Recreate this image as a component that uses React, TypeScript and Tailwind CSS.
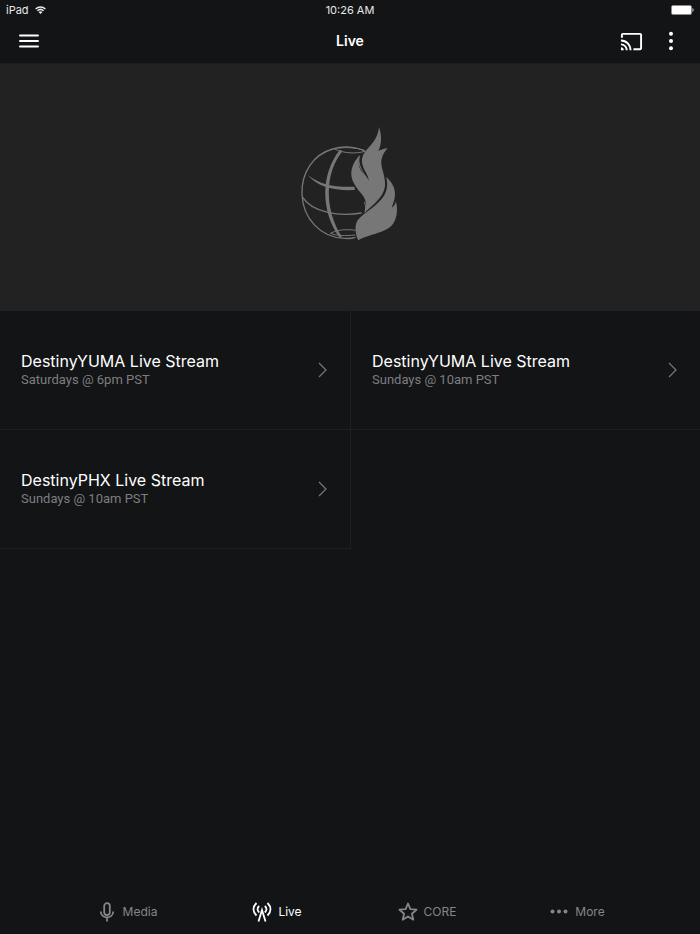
import type { ReactNode } from 'react'
import { MdCast } from 'react-icons/md'

const streams = [
  { id: 1, title: 'DestinyYUMA Live Stream', time: 'Saturdays @ 6pm PST' },
  { id: 2, title: 'DestinyYUMA Live Stream', time: 'Sundays @ 10am PST' },
  { id: 3, title: 'DestinyPHX Live Stream', time: 'Sundays @ 10am PST' },
]

function StatusBar() {
  return (
    <div className="grid h-[19px] grid-cols-3 items-center px-1.5 text-[11px] leading-4 text-[#e8e8e8]">
      <div className="flex items-center gap-1.5">
        <span>iPad</span>
        <svg className="h-2 w-[11px]" viewBox="0 0 36 26" fill="none" stroke="currentColor" strokeWidth="5">
          <path d="M2 9.500C11 1 25 1 34 9.500" />
          <path d="M8 15.500c6-5.500 14-5.500 20 0" />
          <path d="M18 26l-6.500-6.500c4-3.500 9-3.500 13 0z" fill="currentColor" stroke="none" />
        </svg>
      </div>
      <span className="text-center">10:26 AM</span>
      <svg className="h-[10px] w-[23px] justify-self-end" viewBox="0 0 23 10">
        <rect x="0.500" y="0.500" width="20" height="9" rx="1.500" fill="#fff" stroke="#8b8b8b" />
        <path d="M21.500 3c1.500.5 1.500 3.500 0 4z" fill="#ddd" />
      </svg>
    </div>
  )
}

function Logo() {
  return (
    <svg className="h-[130px] w-[120px]" viewBox="0 0 360 390" fill="none" stroke="#777" role="img" aria-label="Destiny">
      <path strokeWidth="4" d="M226 97C199 83 161 80 128 90C68 107 34 163 36 224C38 300 94 357 164 358C176 359 188 358 196 355" />
      <path strokeWidth="3" d="M135 91c28 12 62 14 90 6M145 87c27-3 53-1 78 7" />
      <path fill="#777" stroke="none" d="M149 93L158 96C104 160 102 271 156 354L149 356C93 279 90 168 149 93Z" />
      <path fill="#777" stroke="none" d="M53 168C91 198 135 205 193 203L195 213C135 216 84 205 53 168Z" />
      <path strokeWidth="4" d="M38 235C67 279 144 294 215 282" />
      <path strokeWidth="3" d="M121 343c22-11 48-13 76-9M121 343c20 7 43 8 75 5" />
      <path strokeWidth="3" d="M208 112c-5 20 5 42 19 61M223 249c4 9 5 19 2 29" />
      <path
        fill="#777"
        stroke="none"
        d="M267 24C275 48 276 74 265 96C273 92 282 89 293 88C278 104 271 122 275 142C279 162 287 180 285 202C281 236 248 258 223 282C232 258 228 240 215 225C202 210 193 197 188 185C178 157 187 132 210 107C203 129 206 148 218 162C226 169 232 176 237 185C233 162 214 146 216 122C219 88 262 78 267 24Z"
      />
      <path
        fill="#777"
        stroke="none"
        d="M289 174C304 188 315 204 315 226C315 241 309 255 305 267C312 262 316 255 318 247C323 271 322 292 312 310C294 343 239 344 205 364C196 347 193 320 202 305C220 281 262 263 283 229C292 212 294 194 289 174Z"
      />
    </svg>
  )
}

function StreamCell({ title, time }: { title: string; time: string }) {
  return (
    <a
      className="flex h-[119px] items-center justify-between border-b border-[#1e1f20] pr-[22px] pl-[21px] odd:border-r"
      href="#stream"
    >
      <div>
        <h2 className="text-base leading-5 font-normal text-white">{title}</h2>
        <p className="font-['Roboto','Liberation_Sans',sans-serif] text-[13px] leading-[18px] text-[#7d7e80]">{time}</p>
      </div>
      <svg className="h-4 w-[10px]" viewBox="0 0 10 16" fill="none" stroke="#77787a" strokeWidth="1.200">
        <path d="M1 1l7 7-7 7" />
      </svg>
    </a>
  )
}

function NavItem({ label, active, children }: { label: string; active?: boolean; children: ReactNode }) {
  return (
    <a
      className={`flex items-center justify-center gap-1.5 text-xs ${active ? 'text-white' : 'text-[#858688]'}`}
      href={`#${label.toLowerCase()}`}
      aria-current={active ? 'page' : undefined}
    >
      {children}
      <span>{label}</span>
    </a>
  )
}

export default function App() {
  return (
    <div className="flex min-h-screen flex-col bg-[#131416] font-['Inter','Liberation_Sans',sans-serif]">
      <StatusBar />

      <header className="grid h-[45px] grid-cols-3 items-center border-b border-[#1b1c1d] pr-[19px] pl-[19px] text-white">
        <button className="w-5" type="button" aria-label="Open menu">
          <svg className="h-5 w-5" viewBox="0 0 20 20" stroke="currentColor" strokeWidth="2" strokeLinecap="round">
            <path d="M1 4.500h18M1 10h18M1 15.500h18" />
          </svg>
        </button>
        <h1 className="text-center text-sm font-semibold">Live</h1>
        <div className="flex items-center justify-end gap-[18px]">
          <button type="button" aria-label="Cast">
            <MdCast className="size-[23px]" />
          </button>
          <button type="button" aria-label="More options">
            <svg className="h-5 w-5" viewBox="0 0 20 20" fill="currentColor">
              <circle cx="10" cy="2.800" r="2" />
              <circle cx="10" cy="10" r="2" />
              <circle cx="10" cy="17.200" r="2" />
            </svg>
          </button>
        </div>
      </header>

      <main className="flex-1">
        <section className="flex h-[247px] items-center justify-center bg-[#222] pb-2">
          <Logo />
        </section>

        <section className="grid grid-cols-[calc(50%+1px)_1fr]">
          {streams.map((stream) => (
            <StreamCell key={stream.id} title={stream.title} time={stream.time} />
          ))}
        </section>
      </main>

      <nav className="grid h-11 grid-cols-4 pr-12 pl-[52px]">
        <NavItem label="Media">
          <svg className="size-5" viewBox="0 0 20 20" fill="none" stroke="currentColor" strokeWidth="1.800">
            <rect x="7.200" y="1.200" width="5.600" height="11.800" rx="2.800" />
            <path d="M3.800 9.500c0 7.800 12.400 7.800 12.400 0M10 15.500v4" />
          </svg>
        </NavItem>
        <NavItem label="Live" active>
          <svg className="size-5" viewBox="0 0 20 20" fill="none" stroke="currentColor" strokeWidth="1.800">
            <path d="M4.500 1c-4 4-4 8.500 0 12.500M15.500 1c4 4 4 8.500 0 12.500M7.200 4c-2.200 2-2.200 4.500 0 6.500M12.800 4c2.200 2 2.200 4.500 0 6.500" />
            <path d="M6.500 19.500L10 8l3.500 11.500" />
          </svg>
        </NavItem>
        <NavItem label="CORE">
          <svg className="size-5" viewBox="0 0 20 20" fill="none" stroke="currentColor" strokeWidth="1.800" strokeLinejoin="round">
            <path d="M10 1.500l2.400 5.600 6.100.6-4.600 4 1.400 6-5.300-3.200-5.300 3.200 1.400-6-4.600-4 6.100-.6z" />
          </svg>
        </NavItem>
        <NavItem label="More">
          <svg className="size-5" viewBox="0 0 20 20" fill="currentColor">
            <circle cx="3.500" cy="9.500" r="2" />
            <circle cx="10" cy="9.500" r="2" />
            <circle cx="16.500" cy="9.500" r="2" />
          </svg>
        </NavItem>
      </nav>
    </div>
  )
}
